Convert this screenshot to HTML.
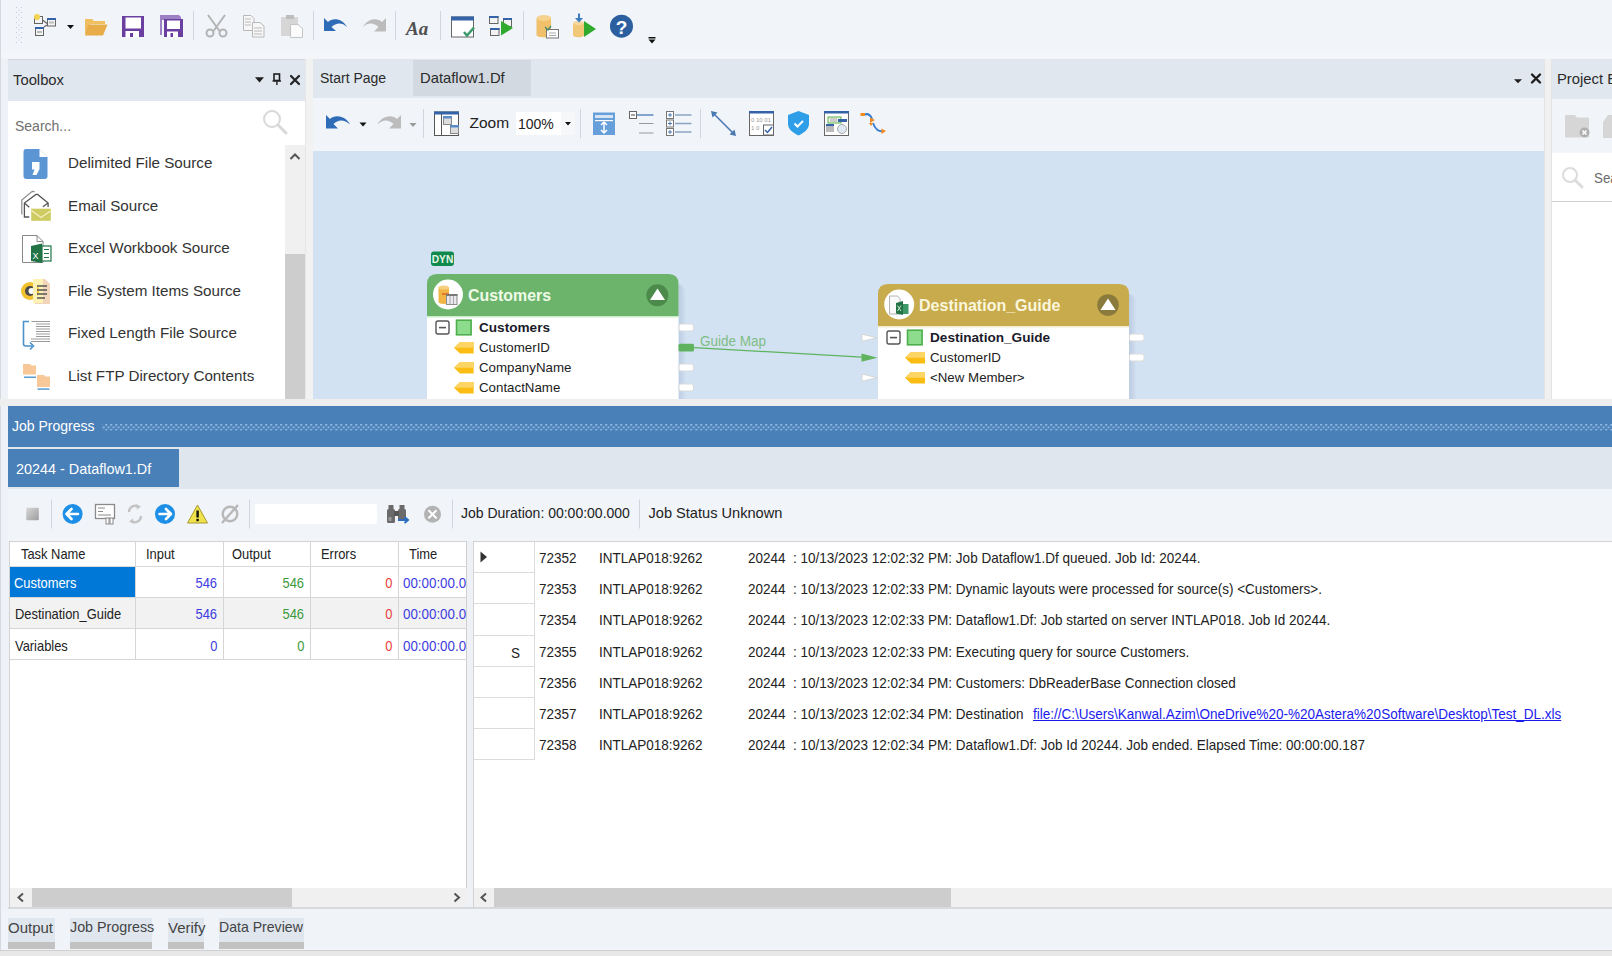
<!DOCTYPE html>
<html><head><meta charset="utf-8">
<style>
*{box-sizing:border-box;margin:0;padding:0}
html,body{width:1612px;height:956px;overflow:hidden;background:#eef2f7;font-family:"Liberation Sans",sans-serif;color:#1e1e1e}
.a{position:absolute}
.t{position:absolute;white-space:nowrap;line-height:1}
svg{position:absolute;overflow:visible}
</style></head><body>
<!-- left edge line -->
<div class="a" style="left:0;top:0;width:1px;height:956px;background:#d4d9e0"></div>

<!-- ===== TOP TOOLBAR ===== -->
<div class="a" id="toptb" style="left:1px;top:0;width:1611px;height:59px;background:#f1f4f9"></div>
<div class="a" style="left:1px;top:52px;width:1611px;height:6px;background:#f4f6fa"></div>


<svg style="left:0;top:0" width="700" height="56">
 <!-- grip -->
 <g fill="#c5cad2">
  <rect x="16" y="7" width="1" height="1"/><rect x="21" y="7" width="1" height="1"/>
  <rect x="16" y="12" width="1" height="1"/><rect x="21" y="12" width="1" height="1"/>
  <rect x="16" y="17" width="1" height="1"/><rect x="21" y="17" width="1" height="1"/>
  <rect x="16" y="22" width="1" height="1"/><rect x="21" y="22" width="1" height="1"/>
  <rect x="16" y="27" width="1" height="1"/><rect x="21" y="27" width="1" height="1"/>
  <rect x="16" y="32" width="1" height="1"/><rect x="21" y="32" width="1" height="1"/>
  <rect x="16" y="37" width="1" height="1"/><rect x="21" y="37" width="1" height="1"/>
  <rect x="16" y="42" width="1" height="1"/><rect x="21" y="42" width="1" height="1"/>
  <rect x="18.5" y="9.5" width="1" height="1"/><rect x="18.5" y="14.5" width="1" height="1"/>
  <rect x="18.5" y="19.5" width="1" height="1"/><rect x="18.5" y="24.5" width="1" height="1"/>
  <rect x="18.5" y="29.5" width="1" height="1"/><rect x="18.5" y="34.5" width="1" height="1"/>
  <rect x="18.5" y="39.5" width="1" height="1"/>
 </g>
 <!-- new dataflow icon -->
 <g>
  <rect x="34.5" y="16.5" width="8" height="7" fill="#f4f4f4" stroke="#666" stroke-width="1"/>
  <circle cx="37" cy="17" r="3" fill="#f2d450"/>
  <rect x="47.5" y="18.5" width="8" height="7.5" fill="#f4f4f4" stroke="#666" stroke-width="1"/>
  <rect x="47" y="18" width="9" height="2" fill="#3563a8"/>
  <rect x="49" y="21.5" width="5" height="2" fill="#bbb"/>
  <rect x="35.5" y="27.5" width="8" height="8" fill="#f4f4f4" stroke="#666" stroke-width="1"/>
  <rect x="35" y="27" width="9" height="2" fill="#3563a8"/>
  <rect x="37" y="31" width="5" height="2" fill="#bbb"/>
  <path d="M42.5 20 L47 23.5 M44 27 L47 25" stroke="#666" stroke-width="1.2" fill="none"/>
 </g>
 <path d="M67 25 L74 25 L70.5 29 Z" fill="#111"/>
 <!-- folder -->
 <path d="M85 19 L92 19 L94 21 L105 21 L105 24 L90 24 L85 35 Z" fill="#f0c060"/>
 <path d="M88 24.5 L107.5 24.5 L103 35.5 L85 35.5 Z" fill="#e8ad48"/>
 <!-- save -->
 <g>
  <path d="M122 16 L144 16 L144 37 L122 37 Z" fill="#6b3fa0"/>
  <rect x="125.5" y="17.5" width="15.5" height="11" fill="#fff"/>
  <rect x="125.5" y="31" width="13.5" height="6" fill="#fff"/>
  <rect x="130" y="33" width="3" height="4" fill="#6b3fa0"/>
 </g>
 <!-- save all -->
 <g>
  <path d="M160 15 L179 15 L181 17 L181 20 L162 20 L162 35 L160 35 Z" fill="#9b80c4"/>
  <path d="M164 19 L183 19 L183 37 L164 37 Z" fill="#6b3fa0"/>
  <rect x="167" y="20.5" width="13" height="8.5" fill="#fff"/>
  <rect x="167" y="31.5" width="11" height="5.5" fill="#fff"/>
  <rect x="170.5" y="33" width="2.5" height="4" fill="#6b3fa0"/>
 </g>
 <rect x="193" y="11" width="1" height="29" fill="#d2d6dc"/>
 <!-- scissors -->
 <g stroke="#b4b4b4" fill="none" stroke-width="2">
  <path d="M208 15 L219.5 31 M225 15 L213.5 31"/>
  <circle cx="210" cy="33" r="3.5"/><circle cx="223" cy="33" r="3.5"/>
 </g>
 <!-- copy -->
 <g stroke="#b8b8b8" fill="#f7f7f7" stroke-width="1">
  <path d="M243.5 15.5 L251 15.5 L254 18.5 L254 30.5 L243.5 30.5 Z"/>
  <path d="M252.5 22.5 L260 22.5 L264 26 L264 37 L252.5 37 Z"/>
  <path d="M245 19 L251 19 M245 22 L251 22 M245 25 L251 25 M254 28 L262 28 M254 31 L262 31 M254 34 L262 34" stroke="#bbb"/>
 </g>
 <!-- paste -->
 <g>
  <rect x="281" y="17" width="17" height="19" fill="#d6d6d6"/>
  <rect x="286" y="15" width="8" height="4" fill="#bdbdbd"/>
  <path d="M290.5 24.5 L298 24.5 L302.5 28.5 L302.5 37.5 L290.5 37.5 Z" fill="#fbfbfb" stroke="#c4c4c4" stroke-width="1"/>
 </g>
 <rect x="313" y="11" width="1" height="29" fill="#d2d6dc"/>
 <!-- undo -->
 <path d="M324 18 L324 31 L336 31 L331.5 27 C336 22.5 342 22 347 27 C343 19 333 17 328 22 Z" fill="#2f6cb8"/>
 <!-- redo -->
 <path d="M386 18 L386 31.5 L374 31.5 L378.5 27 C374 22.5 368 22 363 27 C367 19 377 17 382 22 Z" fill="#bcbcbc"/>
 <rect x="395" y="11" width="1" height="29" fill="#d2d6dc"/>
 <text x="406" y="34.5" font-family="Liberation Serif" font-style="italic" font-weight="bold" font-size="19" fill="#505050">Aa</text>
 <rect x="440" y="11" width="1" height="29" fill="#d2d6dc"/>
 <!-- window check -->
 <g>
  <rect x="451.5" y="17" width="22" height="20" fill="#fff" stroke="#666" stroke-width="1"/>
  <rect x="451" y="16.5" width="23" height="4" fill="#3563a8"/>
  <path d="M464 32 L467 35.5 L474 27.5" stroke="#3d9a6a" stroke-width="2.5" fill="none"/>
 </g>
 <!-- forms play -->
 <g>
  <rect x="489.5" y="16.5" width="8.5" height="7" fill="#f2f2f2" stroke="#666"/>
  <rect x="489" y="16" width="9.5" height="2" fill="#3563a8"/>
  <rect x="503.5" y="18.5" width="8" height="8" fill="#f2f2f2" stroke="#666"/>
  <rect x="503" y="18" width="9" height="2" fill="#3563a8"/>
  <rect x="490.5" y="28.5" width="8.5" height="7" fill="#f2f2f2" stroke="#666"/>
  <rect x="490" y="28" width="9.5" height="2" fill="#3563a8"/>
  <path d="M501 21 L513 28 L501 35.5 Z" fill="#2faa2f"/>
 </g>
 <rect x="523" y="11" width="1" height="29" fill="#d2d6dc"/>
 <!-- db -->
 <g>
  <path d="M536.5 18 L536.5 35 C536.5 38 551 38 551 35 L551 18 Z" fill="#f0c06a"/>
  <ellipse cx="543.75" cy="18" rx="7.25" ry="3" fill="#f5d28e"/>
  <rect x="546.5" y="29.5" width="12" height="8.5" fill="#fff" stroke="#777" stroke-width="1"/>
  <path d="M549 33 L556 33 M549 35.5 L556 35.5" stroke="#aaa"/>
  <path d="M545 27 L548 30 L551 26" stroke="#3d8a6a" stroke-width="1.3" fill="none"/>
 </g>
 <!-- db play -->
 <g>
  <path d="M573 23 L573 35 C573 38 584 38 584 35 L584 23 Z" fill="#f0c878"/>
  <ellipse cx="578.5" cy="23" rx="5.5" ry="2.2" fill="#f5d8a0"/>
  <path d="M579 13.5 L579 20" stroke="#3d7cc0" stroke-width="2"/>
  <path d="M575 18 L579 22.5 L583 18 Z" fill="#3d7cc0"/>
  <path d="M584 21 L596 29 L584 37 Z" fill="#2faa2f"/>
 </g>
 <!-- help -->
 <circle cx="621.5" cy="26.2" r="11.5" fill="#2c5fa0"/>
 <text x="621.5" y="33.5" text-anchor="middle" font-family="Liberation Sans" font-weight="bold" font-size="19" fill="#fff">?</text>
 <!-- overflow -->
 <rect x="648.5" y="37" width="7" height="1.5" fill="#111"/>
 <path d="M648.5 39.5 L655.5 39.5 L652 43.5 Z" fill="#111"/>
</svg>

<!-- ===== TOOLBOX PANEL ===== -->
<div class="a" style="left:8px;top:59px;width:297px;height:340px;background:#fff"></div>
<div class="a" style="left:8px;top:59px;width:297px;height:42px;background:#e0e7ef;border-top:1px solid #cfd6de"></div>
<div class="t" style="left:13px;top:73px;font-size:14.8px;color:#2b2b2b">Toolbox</div>
<svg style="left:240px;top:60px" width="70" height="40">
 <path d="M15 17.2 L24 17.2 L19.5 22.4 Z" fill="#1e1e1e"/>
 <rect x="34" y="14" width="5.5" height="6.5" fill="none" stroke="#1e1e1e" stroke-width="1.6"/>
 <rect x="32.5" y="20.3" width="8.5" height="1.4" fill="#1e1e1e"/>
 <rect x="36.2" y="21.5" width="1.4" height="3.5" fill="#1e1e1e"/>
 <path d="M51 16 L59 24 M59 16 L51 24" stroke="#222" stroke-width="2.2" stroke-linecap="round"/>
</svg>
<div class="t" style="left:15px;top:119px;font-size:14px;color:#707070">Search...</div>
<svg style="left:260px;top:108px" width="32" height="30">
 <circle cx="12" cy="11" r="8" fill="none" stroke="#d8d8d8" stroke-width="2"/>
 <path d="M18 17 L26 25" stroke="#d8d8d8" stroke-width="3" stroke-linecap="round"/>
</svg>
<!-- scrollbar -->
<div class="a" style="left:285px;top:145px;width:20px;height:254px;background:#f0f0f0"></div>
<div class="a" style="left:285px;top:254px;width:20px;height:145px;background:#cdcdcd"></div>
<svg style="left:285px;top:145px" width="20" height="20">
 <path d="M5.5 14 L10 9.5 L14.5 14" stroke="#555" stroke-width="2" fill="none"/>
</svg>
<div class="t" style="left:68px;top:155px;font-size:15.2px;color:#333">Delimited File Source</div>
<div class="t" style="left:68px;top:198px;font-size:15.2px;color:#333">Email Source</div>
<div class="t" style="left:68px;top:240px;font-size:15.2px;color:#333">Excel Workbook Source</div>
<div class="t" style="left:68px;top:283px;font-size:15.2px;color:#333">File System Items Source</div>
<div class="t" style="left:68px;top:325px;font-size:15.2px;color:#333">Fixed Length File Source</div>
<div class="t" style="left:68px;top:368px;font-size:15.2px;color:#333">List FTP Directory Contents</div>
<svg style="left:0;top:140px" width="60" height="259">
 <!-- delimited -->
 <path d="M26 9 L39.5 9 L47.5 17 L47.5 36 Q47.5 39 44.5 39 L26.5 39 Q23.5 39 23.5 36 L23.5 12 Q23.5 9 26 9 Z" fill="#5b95d4"/>
 <path d="M39.5 9 L39.5 17 L47.5 17 Z" fill="#fff"/>
 <path d="M32 22 L39.5 22 L39.5 29 L36.5 35 L32.5 35 L34.5 29.5 L32 29.5 Z" fill="#fff"/>
 <!-- email -->
 <path d="M21.8 74.4 L21.8 60 L32.3 51.4 L34.6 51.6" fill="none" stroke="#8a8a8a" stroke-width="1.2"/>
 <path d="M29.3 77 L24.4 77 L24.4 63 L36 54.4 L37.6 54.4 L48.1 63 L48.1 67 M24.4 63 L29.3 67.2 M48.1 63 L42.8 66.8" fill="none" stroke="#555" stroke-width="1.3"/>
 <rect x="31.2" y="68.7" width="19.6" height="12.1" fill="#cdcb62"/>
 <path d="M31.5 70.5 L41 77.5 L50.5 71" fill="none" stroke="#f5f0c0" stroke-width="1.3"/>
 <!-- excel -->
 <path d="M22.5 95.5 L37 95.5 L43 101.5 L43 122.5 L22.5 122.5 Z" fill="#fff" stroke="#888" stroke-width="1"/>
 <path d="M37 95.5 L37 101.5 L43 101.5" fill="none" stroke="#888" stroke-width="1"/>
 <path d="M31 106 L42 103.5 L42 123 L31 121 Z" fill="#217346"/>
 <rect x="42" y="106" width="9" height="15" fill="#fff" stroke="#217346" stroke-width="1.2"/>
 <path d="M44 109.5 L49 109.5 M44 113.5 L49 113.5 M44 117.5 L49 117.5" stroke="#217346" stroke-width="1.2"/>
 <text x="32.5" y="118.5" font-family="Liberation Sans" font-size="9" fill="#fff">X</text>
 <!-- file system -->
 <path d="M35 139 L45 139 L50 144 L50 164 L35 164 Z" fill="#f0d5ba"/>
 <rect x="33" y="139" width="10" height="24" fill="#fdf2b4"/>
 <circle cx="30" cy="151" r="9" fill="#f2c12e"/>
 <circle cx="30" cy="151" r="5" fill="#4a4a4a"/>
 <circle cx="31.5" cy="151" r="3" fill="#fff"/>
 <rect x="33" y="141" width="4" height="20" fill="#fdf2b4"/>
 <path d="M37 146 L47 146 M37 150 L47 150 M37 154 L47 154 M37 158 L45 158" stroke="#555" stroke-width="1.5"/>
 <!-- fixed length -->
 <path d="M29 181.5 L23.5 181.5 L23.5 204 Q23.5 206 26 206 L32 206" fill="none" stroke="#4a92c9" stroke-width="1.6"/>
 <path d="M30 202.5 L33.5 206 L30 209.5" fill="none" stroke="#4a92c9" stroke-width="1.6"/>
 <path d="M31.5 181.5 L50 181.5 M36 184 L50 184 M36 186.5 L50 186.5 M36 189 L50 189 M36 191.5 L50 191.5 M36 194 L50 194 M36 196.5 L50 196.5 M31 199 L50 199 M31 201.5 L50 201.5" stroke="#9a9a9a" stroke-width="1"/>
 <!-- ftp -->
 <path d="M23 224 L30 224 L31.5 225.5 L36 225.5 L36 234.5 L23 234.5 Z" fill="#f8c898"/>
 <rect x="24" y="236.5" width="12" height="1.5" fill="#5a9bd0"/>
 <path d="M37 235 L44 235 L45.5 236.5 L50 236.5 L50 247 L37 247 Z" fill="#f8c898"/>
 <rect x="37.5" y="248.3" width="12" height="1.5" fill="#5a9bd0"/>
</svg>

<div class="a" style="left:305px;top:59px;width:8px;height:340px;background:#f2f2f2;border-left:1px solid #e6e6e6"></div>
<!-- ===== EDITOR ===== -->
<div class="a" style="left:313px;top:59px;width:1231px;height:39px;background:#e0e7ef"></div>
<div class="a" style="left:413px;top:60px;width:118px;height:36px;background:#d3d9e0"></div>
<div class="t" style="left:320px;top:71px;font-size:14px;color:#2b2b2b">Start Page</div>
<div class="t" style="left:420px;top:71px;font-size:14.8px;color:#2b2b2b">Dataflow1.Df</div>
<div class="a" style="left:313px;top:98px;width:1231px;height:53px;background:#f1f4f9"></div>
<div class="a" style="left:313px;top:151px;width:1231px;height:248px;background:#d3e2f2"></div>
<svg style="left:1505px;top:62px" width="40" height="34">
 <path d="M9 17.2 L17 17.2 L13 21.2 Z" fill="#1e1e1e"/>
 <path d="M27 12.5 L35 20.5 M35 12.5 L27 20.5" stroke="#1e1e1e" stroke-width="2.4" stroke-linecap="round"/>
</svg>
<!-- editor toolbar -->
<div class="a" style="left:516px;top:112px;width:59px;height:23px;background:#fff"></div>
<div class="a" style="left:561px;top:112px;width:14px;height:23px;background:#f6f7f9"></div>
<div class="t" style="left:469.5px;top:115px;font-size:15.5px;color:#222">Zoom</div>
<svg style="left:561px;top:112px" width="14" height="23"><path d="M4 10 L10 10 L7 13.5 Z" fill="#111"/></svg>
<div class="t" style="left:518px;top:116.5px;font-size:14px;color:#222">100%</div>
<svg style="left:313px;top:98px" width="600" height="53">
 <path d="M13 17 L13 30.5 L25 30.5 L20.5 26 C25 21.5 31 21 37 26.5 C33 18 22 16 17 21 Z" fill="#2f6cb8"/>
 <path d="M46.5 24.5 L53.5 24.5 L50 28.5 Z" fill="#111"/>
 <path d="M88 17 L88 30.5 L76 30.5 L80.5 26 C76 21.5 70 21 64.5 26.5 C68.5 18 79 16 84 21 Z" fill="#bcbcbc"/>
 <path d="M96.5 25 L103.5 25 L100 29 Z" fill="#999"/>
 <rect x="110" y="11" width="1" height="29" fill="#d2d6dc"/>
 <rect x="121.5" y="14" width="24" height="23.5" fill="#fff" stroke="#555" stroke-width="1"/>
 <rect x="121" y="13.5" width="25" height="3" fill="#3563a8"/>
 <rect x="128" y="16" width="1" height="21" fill="#555"/>
 <rect x="130.5" y="18.5" width="8" height="8" fill="#ddd" stroke="#888"/>
 <rect x="130" y="18" width="9" height="2.5" fill="#5b8cc8"/>
 <rect x="137.5" y="27.5" width="8" height="8" fill="#ddd" stroke="#888"/>
 <rect x="137" y="27" width="9" height="2.5" fill="#5b8cc8"/>
 <rect x="267" y="11" width="1" height="29" fill="#d2d6dc"/>
 <!-- icon1 -->
 <rect x="280" y="14.5" width="22" height="22.5" fill="#679fdb"/>
 <rect x="282" y="17" width="18" height="3" fill="#d6e4f4"/>
 <rect x="282" y="22" width="18" height="1.2" fill="#fff"/>
 <path d="M291 24.5 L291 34.5 M288 27 L291 24 L294 27 M288 32 L291 35 L294 32" stroke="#fff" stroke-width="1.5" fill="none"/>
 <!-- icon2 -->
 <rect x="316.5" y="13.5" width="7" height="7" fill="#fff" stroke="#666" stroke-width="1"/>
 <path d="M318 17 L322 17" stroke="#444"/>
 <path d="M324 17 L340.5 17" stroke="#4a78b0" stroke-width="1.3"/>
 <path d="M326 25.5 L340.5 25.5 M326 35 L340.5 35" stroke="#999" stroke-width="1.2"/>
 <!-- icon3 -->
 <g stroke="#777" fill="#fff" stroke-width="1">
  <rect x="353.5" y="13.5" width="7" height="7"/><rect x="353.5" y="22" width="7" height="7"/><rect x="353.5" y="30.5" width="7" height="7"/>
 </g>
 <path d="M357 15 L357 19 M355 17 L359 17 M357 23.5 L357 27.5 M355 25.5 L359 25.5 M357 32 L357 36 M355 34 L359 34" stroke="#4a78b0" stroke-width="1"/>
 <path d="M362 17 L378.5 17 M362 25.5 L378.5 25.5 M362 34 L378.5 34" stroke="#8aa4c4" stroke-width="1.4"/>
 <rect x="387" y="11" width="1" height="29" fill="#d2d6dc"/>
 <!-- diagonal -->
 <path d="M401 16 L420 35" stroke="#4a78b0" stroke-width="1.6"/>
 <path d="M398 13 L404.5 14.5 L399.5 19.5 Z M423 38 L416.5 36.5 L421.5 31.5 Z" fill="#4a78b0"/>
 <!-- calendar -->
 <rect x="436.5" y="13.5" width="24" height="24" fill="#fff" stroke="#666" stroke-width="1"/>
 <rect x="436" y="13" width="25" height="2.5" fill="#3563a8"/>
 <text x="438" y="23.5" font-family="Liberation Sans" font-size="6" fill="#999">0 10 01</text>
 <text x="438" y="32" font-family="Liberation Sans" font-size="6" fill="#999">1 0</text>
 <rect x="450.5" y="27" width="10" height="10" fill="#fff" stroke="#666"/>
 <path d="M452 32 L454.5 34.5 L459 29" stroke="#3563a8" stroke-width="1.5" fill="none"/>
 <!-- shield -->
 <path d="M485.5 13 L496 17 L496 26 C496 31 491 35 485.5 37.5 C480 35 475 31 475 26 L475 17 Z" fill="#2e9ee8"/>
 <path d="M481.5 25.5 L484.5 28.5 L490 23" stroke="#fff" stroke-width="2" fill="none"/>
 <!-- window -->
 <rect x="511.5" y="13.5" width="24" height="24" fill="#fff" stroke="#666" stroke-width="1"/>
 <rect x="511" y="13" width="25" height="2.5" fill="#3563a8"/>
 <rect x="515" y="19" width="13" height="6" fill="#e8f3e0" stroke="#5ab04a" stroke-width="1"/>
 <rect x="517" y="20" width="7" height="4" fill="#ccc"/>
 <rect x="513" y="27" width="8" height="7" fill="#bbb"/>
 <rect x="513" y="26" width="8" height="2" fill="#3563a8"/>
 <rect x="525" y="21" width="9" height="3" fill="#3563a8"/>
 <circle cx="529" cy="31" r="4.5" fill="#dde8f2" stroke="#aaa"/>
 <!-- arrows -->
 <path d="M551 16.5 C556 15 558 18 559 21" stroke="#3b7ed0" stroke-width="2" fill="none"/>
 <path d="M560 25 C562 31 566 34 570 33" stroke="#3b7ed0" stroke-width="2" fill="none"/>
 <rect x="547.5" y="15" width="4.5" height="3" fill="#f08a24"/>
 <path d="M557 19.5 L562 22 L557 25 Z" fill="#f08a24"/>
 <path d="M556 25 L560 25 L558 28 Z" fill="#f08a24"/>
 <path d="M568.5 30.5 L573 33 L568.5 36 Z" fill="#f08a24"/>
</svg>


<!-- ===== CANVAS NODES ===== -->
<div class="a" style="left:313px;top:151px;width:1231px;height:248px;overflow:hidden">
<svg style="left:-313px;top:-151px" width="1544" height="399">
 <!-- DYN -->
 <rect x="431" y="251.5" width="23" height="14.5" rx="3" fill="#0f8a4c"/>
 <text x="442.5" y="263.3" text-anchor="middle" font-family="Liberation Sans" font-size="11" font-weight="bold" fill="#e8f5ea" textLength="21.5" lengthAdjust="spacingAndGlyphs">DYN</text>
 <!-- customers shadow -->
 <defs><linearGradient id="shd" x1="0" y1="0" x2="1" y2="0"><stop offset="0" stop-color="#bccde2"/><stop offset="0.6" stop-color="#c8d7ea"/><stop offset="1" stop-color="#d3e2f2"/></linearGradient></defs>
 <path d="M678.5 284 Q684 286 686 292 L686 404 L678.5 404 Z" fill="url(#shd)"/>
 <!-- customers node -->
 <path d="M427 316 L427 284 Q427 274 437 274 L668.5 274 Q678.5 274 678.5 284 L678.5 316 Z" fill="#6cb36c"/>
 <rect x="427" y="316" width="251.5" height="90" fill="#fff"/>
 <rect x="427" y="316" width="251.5" height="1.5" fill="#c9ecc9"/>
 <circle cx="448" cy="294.5" r="15" fill="#fff"/>
 <path d="M438.5 287.5 L438.5 302 C438.5 304.5 449 304.5 449 302 L449 287.5 Z" fill="#f0b545"/>
 <ellipse cx="443.75" cy="287.5" rx="5.25" ry="2" fill="#f6cf80"/>
 <rect x="442" y="293" width="7" height="2" fill="#e07a30"/>
 <rect x="446.5" y="294.5" width="10.5" height="10" fill="#e8e8ee" stroke="#8c8c8c" stroke-width="1"/>
 <path d="M450 296 L450 304 M453.5 296 L453.5 304" stroke="#aaa"/>
 <rect x="446" y="294" width="11.5" height="2" fill="#7a7a7a"/>
 <text x="468" y="300.8" font-family="Liberation Sans" font-size="16.5" font-weight="bold" fill="#effbe6" textLength="83" lengthAdjust="spacingAndGlyphs">Customers</text>
 <circle cx="657.4" cy="295.2" r="11" fill="#4c8a4c"/>
 <path d="M650 300 L657.5 288.5 L665 300 Z" fill="#fff"/>
 <!-- rows -->
 <rect x="436" y="321" width="13" height="13" rx="2" fill="#fff" stroke="#555" stroke-width="1.4"/>
 <rect x="439" y="326.8" width="7" height="1.6" fill="#555"/>
 <rect x="456.5" y="320.2" width="14.6" height="14.6" fill="#8ddb8d" stroke="#4cae4c" stroke-width="1.6"/>
 <text x="479" y="331.8" font-family="Liberation Sans" font-size="13.6" font-weight="bold" fill="#1a1a2a">Customers</text>
 <g id="tagc">
 </g>
 <path d="M454 347.7 L460 342 L473.6 342 L473.6 353.5 L460 353.5 Z" fill="#fbbd14"/>
 <path d="M454 347.7 L460 342 L473.6 342 L473.6 347.7 Z" fill="#fdd565"/>
 <path d="M454 367.7 L460 362 L473.6 362 L473.6 373.5 L460 373.5 Z" fill="#fbbd14"/>
 <path d="M454 367.7 L460 362 L473.6 362 L473.6 367.7 Z" fill="#fdd565"/>
 <path d="M454 387.7 L460 382 L473.6 382 L473.6 393.5 L460 393.5 Z" fill="#fbbd14"/>
 <path d="M454 387.7 L460 382 L473.6 382 L473.6 387.7 Z" fill="#fdd565"/>
 <text x="479" y="351.7" font-family="Liberation Sans" font-size="13.3" fill="#222">CustomerID</text>
 <text x="479" y="371.7" font-family="Liberation Sans" font-size="13.3" fill="#222">CompanyName</text>
 <text x="479" y="391.7" font-family="Liberation Sans" font-size="13.3" fill="#222">ContactName</text>
 <!-- ports -->
 <g fill="#fff" stroke="#dadada" stroke-width="1">
  <rect x="679" y="324" width="14.5" height="7" rx="2"/>
  <rect x="679" y="364" width="14.5" height="7" rx="2"/>
  <rect x="679" y="384" width="14.5" height="7" rx="2"/>
 </g>
 <rect x="678.5" y="343.8" width="15.5" height="7.6" rx="1.5" fill="#5fb35f"/>
 <!-- link -->
 <path d="M694 347.6 L866 357.3" stroke="#5fb35f" stroke-width="1.3"/>
 <path d="M861.5 353.6 L877.5 357.8 L861.5 361.8 Z" fill="#5fb35f"/>
 <text x="700" y="346" font-family="Liberation Sans" font-size="14" fill="#80bd86" textLength="66" lengthAdjust="spacingAndGlyphs">Guide Map</text>
 <!-- input arrows -->
 <path d="M862 334.2 L877 337.8 L862 341.3 Z" fill="#fff" stroke="#cfcfcf" stroke-width="0.8"/>
 <path d="M862 374 L877 377.7 L862 381.2 Z" fill="#fff" stroke="#cfcfcf" stroke-width="0.8"/>
 <!-- destination shadow -->
 <path d="M1129 294 Q1134.5 296 1136.5 302 L1136.5 404 L1129 404 Z" fill="url(#shd)"/>
 <path d="M878 326 L878 294 Q878 284 888 284 L1119 284 Q1129 284 1129 294 L1129 326 Z" fill="#c8ab4c"/>
 <rect x="878" y="326" width="251" height="80" fill="#fff"/>
 <rect x="878" y="326" width="251" height="1.5" fill="#f2ead0"/>
 <circle cx="899.2" cy="304.5" r="15" fill="#fff"/>
 <path d="M889.5 296 L897.5 296 L900 298.5 L900 314 L889.5 314 Z" fill="#fafafa" stroke="#b4b4b4" stroke-width="1"/>
 <path d="M896 303 L903 301 L903 315 L896 313.5 Z" fill="#217346"/>
 <rect x="903" y="304" width="5.5" height="10" fill="#3d9a68"/>
 <path d="M897.5 305.5 L901 311 M901 305.5 L897.5 311" stroke="#cfe8d6" stroke-width="1"/>
 <text x="919" y="310.8" font-family="Liberation Sans" font-size="16.5" font-weight="bold" fill="#fbf6dc" textLength="141.5" lengthAdjust="spacingAndGlyphs">Destination_Guide</text>
 <circle cx="1108" cy="305" r="10.8" fill="#8a7a3c"/>
 <path d="M1100.5 310 L1108 298.5 L1115.5 310 Z" fill="#fff"/>
 <rect x="887" y="331" width="13" height="13" rx="2" fill="#fff" stroke="#555" stroke-width="1.4"/>
 <rect x="890" y="336.8" width="7" height="1.6" fill="#555"/>
 <rect x="907.5" y="330.2" width="14.6" height="14.6" fill="#8ddb8d" stroke="#4cae4c" stroke-width="1.6"/>
 <text x="930" y="341.8" font-family="Liberation Sans" font-size="13.6" font-weight="bold" fill="#1a1a2a">Destination_Guide</text>
 <path d="M905 357.7 L911 352 L925 352 L925 363.5 L911 363.5 Z" fill="#fbbd14"/>
 <path d="M905 357.7 L911 352 L925 352 L925 357.7 Z" fill="#fdd565"/>
 <path d="M905 377.7 L911 372 L925 372 L925 383.5 L911 383.5 Z" fill="#fbbd14"/>
 <path d="M905 377.7 L911 372 L925 372 L925 377.7 Z" fill="#fdd565"/>
 <text x="930" y="361.7" font-family="Liberation Sans" font-size="13.3" fill="#222">CustomerID</text>
 <text x="930" y="381.7" font-family="Liberation Sans" font-size="13.3" fill="#222">&lt;New Member&gt;</text>
 <g fill="#fff" stroke="#dadada" stroke-width="1">
  <rect x="1129.5" y="334" width="14.5" height="7" rx="2"/>
  <rect x="1129.5" y="354" width="14.5" height="7" rx="2"/>
 </g>
</svg>
</div>
<!-- ===== PROJECT EXPLORER ===== -->
<div class="a" style="left:1552px;top:59px;width:60px;height:340px;background:#fff"></div>
<div class="a" style="left:1552px;top:59px;width:60px;height:40px;background:#e0e7ef"></div>
<div class="a" style="left:1552px;top:99px;width:60px;height:54px;background:#f1f4f9"></div>
<div class="a" style="left:1552px;top:201px;width:60px;height:1px;background:#d0d0d0"></div>
<div class="t" style="left:1557px;top:72px;font-size:14.8px;color:#2b2b2b">Project Explorer</div>
<div class="t" style="left:1594px;top:169.5px;font-size:15.5px;color:#6a6a6a;transform:scaleX(.86);transform-origin:0 0">Search</div>
<svg style="left:1552px;top:100px" width="60" height="100">
 <path d="M13 15 L23 15 L25 17.5 L37 17.5 L37 37.5 L13 37.5 Z" fill="#d6d6d6"/>
 <circle cx="32.5" cy="32.5" r="5" fill="#b0b0b0"/>
 <path d="M30.5 30.5 L34.5 34.5 M34.5 30.5 L30.5 34.5" stroke="#fff" stroke-width="1.5"/>
 <path d="M51 22 L56 15 L62 15 L62 38 L51 38 Z" fill="#d6d6d6"/>
 <circle cx="18" cy="75" r="7" fill="none" stroke="#dcdcdc" stroke-width="2"/>
 <path d="M23 80 L30 87" stroke="#dcdcdc" stroke-width="3" stroke-linecap="round"/>
</svg>
<div class="a" style="left:1544px;top:59px;width:8px;height:340px;background:#f1f1f1;border-left:1px solid #e4e4e4;border-right:1px solid #e4e4e4"></div>

<!-- splitter -->
<div class="a" style="left:0;top:399px;width:1612px;height:7px;background:#eeeeee"></div>

<!-- ===== JOB PROGRESS ===== -->
<div class="a" style="left:8px;top:406px;width:1604px;height:41px;background:#4a80b8"></div>
<div class="t" style="left:12px;top:419px;font-size:14px;color:#fff">Job Progress</div>
<div class="a" style="left:8px;top:447px;width:1604px;height:42px;background:#dfe6ee"></div>
<div class="a" style="left:8px;top:449px;width:171px;height:37.5px;background:#4a80b8"></div>
<div class="t" style="left:16px;top:462px;font-size:14.4px;color:#fff">20244 - Dataflow1.Df</div>
<div class="a" style="left:8px;top:489px;width:1604px;height:52px;background:#f1f4f9"></div>
<svg style="left:0;top:406px" width="1612" height="41">
 <defs><pattern id="dots" x="0.3" y="18.3" width="5" height="5" patternUnits="userSpaceOnUse">
  <rect x="0" y="0" width="1.8" height="1.2" fill="#c0e0ff"/>
  <rect x="2.5" y="2.5" width="1.8" height="1.2" fill="#c0e0ff"/>
 </pattern></defs>
 <rect x="102" y="18" width="1510" height="6.5" fill="url(#dots)"/>
</svg>
<div class="t" style="left:461px;top:506px;font-size:14px;color:#222">Job Duration: 00:00:00.000</div>
<div class="t" style="left:648.5px;top:506px;font-size:14.6px;color:#222">Job Status Unknown</div>
<div class="a" style="left:255px;top:504px;width:122px;height:19.5px;background:#fff;border-radius:2px"></div>
<svg style="left:0;top:487px" width="660" height="54">
 <defs><linearGradient id="stopg" x1="0" y1="0" x2="1" y2="1"><stop offset="0" stop-color="#d8d8d8"/><stop offset="1" stop-color="#9c9c9c"/></linearGradient></defs>
 <rect x="26.2" y="20.7" width="12.6" height="12.6" fill="url(#stopg)" rx="1"/>
 <rect x="51" y="12.5" width="1" height="29" fill="#d2d6dc"/>
 <circle cx="72.6" cy="27" r="10" fill="#1e8fe6"/>
 <path d="M78 27 L67 27 M71.5 22 L66.5 27 L71.5 32" stroke="#fff" stroke-width="2.6" fill="none" stroke-linecap="round" stroke-linejoin="round"/>
 <rect x="95.5" y="17.5" width="19" height="14" fill="#fff" stroke="#8a8a8a" stroke-width="1.3"/>
 <path d="M98 21 L105 21 M98 24.5 L103 24.5 M98 28 L111 28" stroke="#8a8a8a" stroke-width="1.2"/>
 <rect x="106" y="31" width="3" height="6" fill="#fff" stroke="#8a8a8a" stroke-width="1"/>
 <rect x="110" y="31" width="3" height="6" fill="#fff" stroke="#8a8a8a" stroke-width="1"/>
 <path d="M129 25 C129 20 134 17.5 138 19.5 M141 29 C141 34 136 36.5 132 34.5" stroke="#c4c4c4" stroke-width="2.4" fill="none"/>
 <path d="M136 17 L141 19.5 L137 22.5 Z M134 37 L129 34.5 L133 31.5 Z" fill="#c4c4c4"/>
 <circle cx="165" cy="27" r="10" fill="#1e8fe6"/>
 <path d="M159.5 27 L170.5 27 M166 22 L171 27 L166 32" stroke="#fff" stroke-width="2.6" fill="none" stroke-linecap="round" stroke-linejoin="round"/>
 <path d="M197.5 18 L207.5 36 L187.5 36 Z" fill="#f0e24a" stroke="#a89a30" stroke-width="1" stroke-linejoin="round"/>
 <rect x="196.4" y="23.5" width="2.4" height="7" fill="#111"/>
 <rect x="196.4" y="31.8" width="2.4" height="2.4" fill="#111"/>
 <circle cx="230" cy="27" r="7.3" fill="none" stroke="#b8b8b8" stroke-width="2.4"/>
 <path d="M238 18 L222 36" stroke="#b8b8b8" stroke-width="2.4"/>
 <rect x="249" y="12.5" width="1" height="29" fill="#d2d6dc"/>
 <!-- binoculars -->
 <rect x="387" y="22" width="8" height="14" rx="1.5" fill="#6a6a6a"/>
 <rect x="398" y="22" width="8" height="11" rx="1.5" fill="#6a6a6a"/>
 <rect x="388.5" y="18" width="5" height="5" fill="#6a6a6a"/>
 <rect x="399.5" y="18" width="5" height="5" fill="#6a6a6a"/>
 <rect x="394" y="24" width="5" height="5" fill="#555"/>
 <rect x="388.5" y="30" width="3" height="4" fill="#999"/>
 <path d="M398 33 L407 33 M404.5 30 L408 33 L404.5 36" stroke="#2b6cc0" stroke-width="2" fill="none"/>
 <circle cx="432.5" cy="27.2" r="8.5" fill="#b3b3b3"/>
 <path d="M429 23.7 L436 30.7 M436 23.7 L429 30.7" stroke="#fff" stroke-width="2" stroke-linecap="round"/>
 <rect x="452" y="12.5" width="1" height="29" fill="#d2d6dc"/>
 <rect x="639" y="12.5" width="1" height="29" fill="#d2d6dc"/>
</svg>

<!-- grids -->
<style>
.lg{font-size:15px;color:#222;line-height:1;transform:scaleX(.9);transform-origin:0 0}
.gh{font-size:15px;color:#222;transform:scaleX(.86);transform-origin:0 0}
.gn{font-size:15px;transform:scaleX(.86);transform-origin:0 0}
.gr{font-size:15px;transform:scaleX(.86);transform-origin:100% 0}
</style>
<div class="a" style="left:9px;top:541px;width:458px;height:367px;background:#fff;border:1px solid #d2d2d2;border-right:1px solid #cfcfcf"></div>
<div class="a" style="left:472.5px;top:541px;width:1140px;height:367px;background:#fff;border-left:1px solid #d2d2d2;border-top:1px solid #d2d2d2"></div>
<!-- left grid -->
<div class="a" style="left:10px;top:566.8px;width:125px;height:30px;background:#0078d7"></div>
<div class="a" style="left:10px;top:597.6px;width:456px;height:31px;background:#f2f2f2"></div>
<div class="a" style="left:10px;top:565.5px;width:456px;height:1.2px;background:#dadada"></div>
<div class="a" style="left:10px;top:596.8px;width:456px;height:1px;background:#d6d6d6"></div>
<div class="a" style="left:10px;top:628.3px;width:456px;height:1px;background:#d6d6d6"></div>
<div class="a" style="left:10px;top:659px;width:456px;height:1px;background:#d6d6d6"></div>
<div class="a" style="left:134.7px;top:542px;width:1px;height:117px;background:#d6d6d6"></div>
<div class="a" style="left:222.5px;top:542px;width:1px;height:117px;background:#d6d6d6"></div>
<div class="a" style="left:310.3px;top:542px;width:1px;height:117px;background:#d6d6d6"></div>
<div class="a" style="left:398px;top:542px;width:1px;height:117px;background:#d6d6d6"></div>
<div class="t gh" style="left:20.5px;top:546.3px">Task Name</div>
<div class="t gh" style="left:145.5px;top:546.3px">Input</div>
<div class="t gh" style="left:232px;top:546.3px">Output</div>
<div class="t gh" style="left:320.5px;top:546.3px">Errors</div>
<div class="t gh" style="left:409px;top:546.3px">Time</div>
<div class="t gn" style="left:14px;top:575px;color:#fff">Customers</div>
<div class="t gn" style="left:15px;top:606.3px;color:#222">Destination_Guide</div>
<div class="t gn" style="left:15px;top:637.5px;color:#222">Variables</div>
<div class="t gr" style="right:1395px;top:575px;color:#3c3ce0">546</div>
<div class="t gr" style="right:1395px;top:606.3px;color:#3c3ce0">546</div>
<div class="t gr" style="right:1395px;top:637.5px;color:#3c3ce0">0</div>
<div class="t gr" style="right:1308px;top:575px;color:#3b9a3b">546</div>
<div class="t gr" style="right:1308px;top:606.3px;color:#3b9a3b">546</div>
<div class="t gr" style="right:1308px;top:637.5px;color:#3b9a3b">0</div>
<div class="t gr" style="right:1220px;top:575px;color:#e83c3c">0</div>
<div class="t gr" style="right:1220px;top:606.3px;color:#e83c3c">0</div>
<div class="t gr" style="right:1220px;top:637.5px;color:#e83c3c">0</div>
<div class="a" style="left:399px;top:566px;width:67px;height:93px;overflow:hidden">
 <div class="t gn" style="left:3.5px;top:9px;color:#3c3ce0;transform:scaleX(.89)">00:00:00.0</div>
 <div class="t gn" style="left:3.5px;top:40.3px;color:#3c3ce0;transform:scaleX(.89)">00:00:00.0</div>
 <div class="t gn" style="left:3.5px;top:71.5px;color:#3c3ce0;transform:scaleX(.89)">00:00:00.0</div>
</div>
<!-- log grid -->
<div class="a" style="left:534px;top:542px;width:1px;height:217.5px;background:#dcdcdc"></div>
<svg style="left:474px;top:541px" width="20" height="30"><path d="M6.5 10.5 L13 16 L6.5 21.5 Z" fill="#333"/></svg>
<div class="t lg" style="left:538.5px;top:550.0px">72352</div>
<div class="t lg" style="left:598.5px;top:550.0px">INTLAP018:9262</div>
<div class="t lg" style="left:748px;top:550.0px">20244</div>
<div class="t lg" style="left:793px;top:550.0px">: 10/13/2023 12:02:32 PM: Job Dataflow1.Df queued. Job Id: 20244.</div>
<div class="a" style="left:474px;top:572.2px;width:60px;height:1px;background:#dcdcdc"></div>
<div class="t lg" style="left:538.5px;top:581.2px">72353</div>
<div class="t lg" style="left:598.5px;top:581.2px">INTLAP018:9262</div>
<div class="t lg" style="left:748px;top:581.2px">20244</div>
<div class="t lg" style="left:793px;top:581.2px">: 10/13/2023 12:02:33 PM: Dynamic layouts were processed for source(s) &lt;Customers&gt;.</div>
<div class="a" style="left:474px;top:603.4px;width:60px;height:1px;background:#dcdcdc"></div>
<div class="t lg" style="left:538.5px;top:612.4px">72354</div>
<div class="t lg" style="left:598.5px;top:612.4px">INTLAP018:9262</div>
<div class="t lg" style="left:748px;top:612.4px">20244</div>
<div class="t lg" style="left:793px;top:612.4px">: 10/13/2023 12:02:33 PM: Dataflow1.Df: Job started on server INTLAP018. Job Id 20244.</div>
<div class="a" style="left:474px;top:634.6px;width:60px;height:1px;background:#dcdcdc"></div>
<div class="t lg" style="left:538.5px;top:643.6px">72355</div>
<div class="t lg" style="left:598.5px;top:643.6px">INTLAP018:9262</div>
<div class="t lg" style="left:748px;top:643.6px">20244</div>
<div class="t lg" style="left:793px;top:643.6px">: 10/13/2023 12:02:33 PM: Executing query for source Customers.</div>
<div class="a" style="left:474px;top:665.8px;width:60px;height:1px;background:#dcdcdc"></div>
<div class="t lg" style="left:538.5px;top:674.8px">72356</div>
<div class="t lg" style="left:598.5px;top:674.8px">INTLAP018:9262</div>
<div class="t lg" style="left:748px;top:674.8px">20244</div>
<div class="t lg" style="left:793px;top:674.8px">: 10/13/2023 12:02:34 PM: Customers: DbReaderBase Connection closed</div>
<div class="a" style="left:474px;top:697.0px;width:60px;height:1px;background:#dcdcdc"></div>
<div class="t lg" style="left:538.5px;top:706.0px">72357</div>
<div class="t lg" style="left:598.5px;top:706.0px">INTLAP018:9262</div>
<div class="t lg" style="left:748px;top:706.0px">20244</div>
<div class="t lg" style="left:793px;top:706.0px">: 10/13/2023 12:02:34 PM: Destination </div>
<div class="a" style="left:474px;top:728.2px;width:60px;height:1px;background:#dcdcdc"></div>
<div class="t lg" style="left:538.5px;top:737.2px">72358</div>
<div class="t lg" style="left:598.5px;top:737.2px">INTLAP018:9262</div>
<div class="t lg" style="left:748px;top:737.2px">20244</div>
<div class="t lg" style="left:793px;top:737.2px">: 10/13/2023 12:02:34 PM: Dataflow1.Df: Job Id 20244. Job ended. Elapsed Time: 00:00:00.187</div>
<div class="a" style="left:474px;top:759.4px;width:60px;height:1px;background:#dcdcdc"></div>
<div class="t lg" style="left:1032.5px;top:706.0px;color:#1a1aee;text-decoration:underline">file://C:\Users\Kanwal.Azim\OneDrive%20-%20Astera%20Software\Desktop\Test_DL.xls</div>
<div class="t lg" style="left:511px;top:644.6px">S</div>
<!-- scrollbars -->
<div class="a" style="left:10px;top:888px;width:456.5px;height:19px;background:#f0f0f0"></div>
<div class="a" style="left:31.5px;top:888px;width:260.5px;height:19px;background:#cdcdcd"></div>
<div class="a" style="left:473.5px;top:888px;width:1139px;height:19px;background:#f0f0f0"></div>
<div class="a" style="left:493.8px;top:888px;width:457px;height:19px;background:#cdcdcd"></div>
<svg style="left:0;top:888px" width="500" height="19">
 <path d="M23 5.5 L18.5 9.5 L23 13.5" stroke="#555" stroke-width="2" fill="none"/>
 <path d="M454.5 5.5 L459 9.5 L454.5 13.5" stroke="#555" stroke-width="2" fill="none"/>
 <path d="M486 5.5 L481.5 9.5 L486 13.5" stroke="#555" stroke-width="2" fill="none"/>
</svg>
<div class="a" style="left:8px;top:907px;width:1604px;height:2px;background:#d6dade"></div>
<!-- bottom tabs -->
<div class="a" style="left:1px;top:909px;width:1611px;height:41px;background:#f0f3f8"></div>
<div class="a" style="left:8px;top:918px;width:46.6px;height:24px;background:#dfe6ee"></div>
<div class="a" style="left:70px;top:918px;width:82px;height:24px;background:#dfe6ee"></div>
<div class="a" style="left:168px;top:918px;width:35.5px;height:24px;background:#dfe6ee"></div>
<div class="a" style="left:219px;top:918px;width:84.7px;height:24px;background:#dfe6ee"></div>
<div class="a" style="left:8px;top:942px;width:46.6px;height:7px;background:#c2c2c2"></div>
<div class="a" style="left:70px;top:942px;width:82px;height:7px;background:#c2c2c2"></div>
<div class="a" style="left:168px;top:942px;width:35.5px;height:7px;background:#c2c2c2"></div>
<div class="a" style="left:219px;top:942px;width:84.7px;height:7px;background:#c2c2c2"></div>
<div class="t" style="left:8px;top:920px;font-size:15px;color:#444">Output</div>
<div class="t" style="left:70px;top:920px;font-size:14.3px;color:#444">Job Progress</div>
<div class="t" style="left:168px;top:920px;font-size:15px;color:#444">Verify</div>
<div class="t" style="left:219px;top:920px;font-size:14.1px;color:#444">Data Preview</div>
<div class="a" style="left:0;top:950px;width:1612px;height:6px;background:#e8e8e8;border-top:1px solid #d0d0d0"></div>
</body></html>
